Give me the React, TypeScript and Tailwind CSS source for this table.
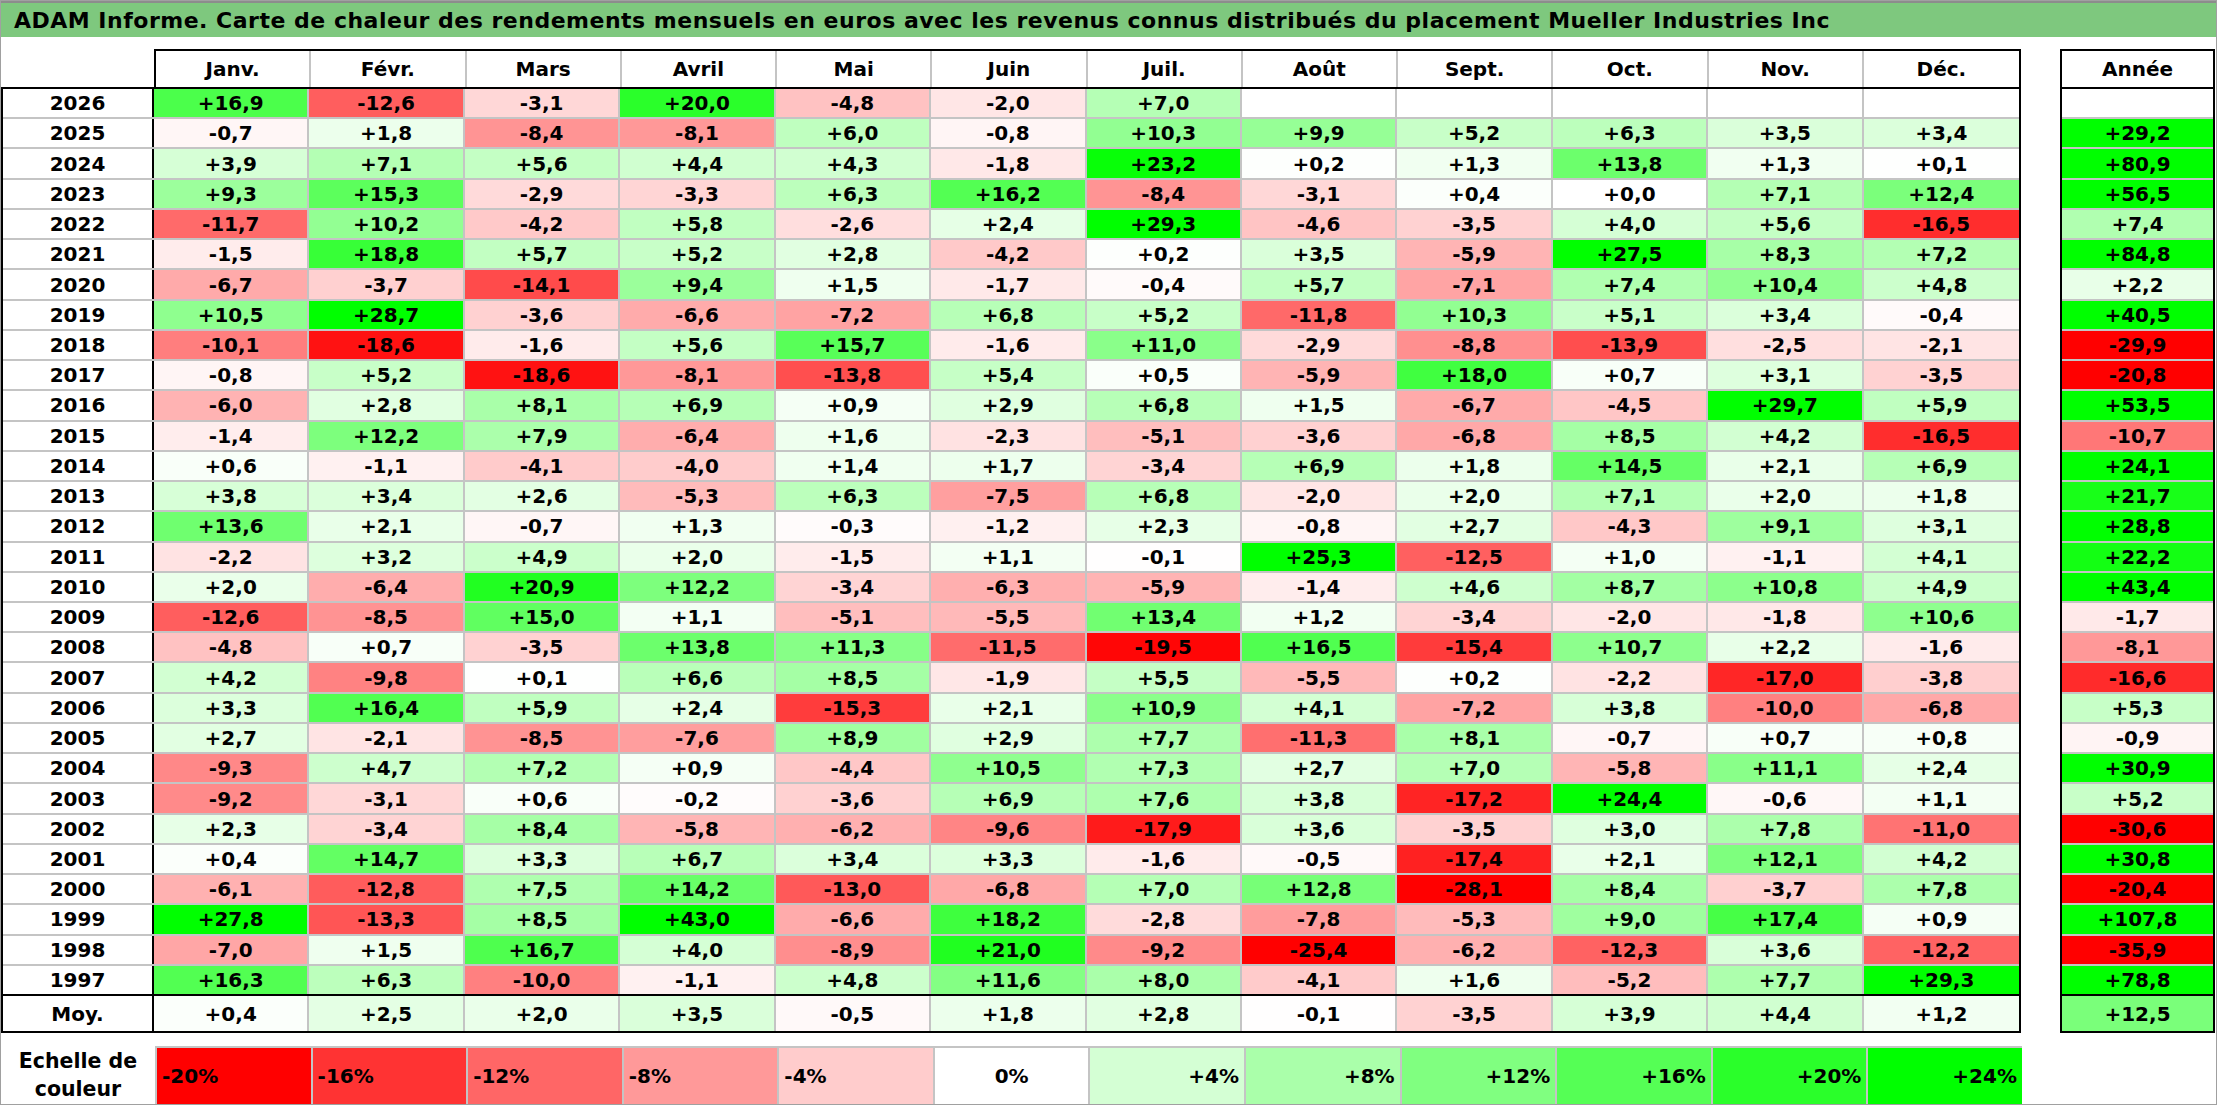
import React from 'react'

const MONTHS = ['Janv.', 'Févr.', 'Mars', 'Avril', 'Mai', 'Juin', 'Juil.', 'Août', 'Sept.', 'Oct.', 'Nov.', 'Déc.']

// year, 12 months (blank = no data), annual
const ROWS: [string, string[], string][] = [
  ['2026', ['+16,9', '-12,6', '-3,1', '+20,0', '-4,8', '-2,0', '+7,0', '', '', '', '', ''], ''],
  ['2025', ['-0,7', '+1,8', '-8,4', '-8,1', '+6,0', '-0,8', '+10,3', '+9,9', '+5,2', '+6,3', '+3,5', '+3,4'], '+29,2'],
  ['2024', ['+3,9', '+7,1', '+5,6', '+4,4', '+4,3', '-1,8', '+23,2', '+0,2', '+1,3', '+13,8', '+1,3', '+0,1'], '+80,9'],
  ['2023', ['+9,3', '+15,3', '-2,9', '-3,3', '+6,3', '+16,2', '-8,4', '-3,1', '+0,4', '+0,0', '+7,1', '+12,4'], '+56,5'],
  ['2022', ['-11,7', '+10,2', '-4,2', '+5,8', '-2,6', '+2,4', '+29,3', '-4,6', '-3,5', '+4,0', '+5,6', '-16,5'], '+7,4'],
  ['2021', ['-1,5', '+18,8', '+5,7', '+5,2', '+2,8', '-4,2', '+0,2', '+3,5', '-5,9', '+27,5', '+8,3', '+7,2'], '+84,8'],
  ['2020', ['-6,7', '-3,7', '-14,1', '+9,4', '+1,5', '-1,7', '-0,4', '+5,7', '-7,1', '+7,4', '+10,4', '+4,8'], '+2,2'],
  ['2019', ['+10,5', '+28,7', '-3,6', '-6,6', '-7,2', '+6,8', '+5,2', '-11,8', '+10,3', '+5,1', '+3,4', '-0,4'], '+40,5'],
  ['2018', ['-10,1', '-18,6', '-1,6', '+5,6', '+15,7', '-1,6', '+11,0', '-2,9', '-8,8', '-13,9', '-2,5', '-2,1'], '-29,9'],
  ['2017', ['-0,8', '+5,2', '-18,6', '-8,1', '-13,8', '+5,4', '+0,5', '-5,9', '+18,0', '+0,7', '+3,1', '-3,5'], '-20,8'],
  ['2016', ['-6,0', '+2,8', '+8,1', '+6,9', '+0,9', '+2,9', '+6,8', '+1,5', '-6,7', '-4,5', '+29,7', '+5,9'], '+53,5'],
  ['2015', ['-1,4', '+12,2', '+7,9', '-6,4', '+1,6', '-2,3', '-5,1', '-3,6', '-6,8', '+8,5', '+4,2', '-16,5'], '-10,7'],
  ['2014', ['+0,6', '-1,1', '-4,1', '-4,0', '+1,4', '+1,7', '-3,4', '+6,9', '+1,8', '+14,5', '+2,1', '+6,9'], '+24,1'],
  ['2013', ['+3,8', '+3,4', '+2,6', '-5,3', '+6,3', '-7,5', '+6,8', '-2,0', '+2,0', '+7,1', '+2,0', '+1,8'], '+21,7'],
  ['2012', ['+13,6', '+2,1', '-0,7', '+1,3', '-0,3', '-1,2', '+2,3', '-0,8', '+2,7', '-4,3', '+9,1', '+3,1'], '+28,8'],
  ['2011', ['-2,2', '+3,2', '+4,9', '+2,0', '-1,5', '+1,1', '-0,1', '+25,3', '-12,5', '+1,0', '-1,1', '+4,1'], '+22,2'],
  ['2010', ['+2,0', '-6,4', '+20,9', '+12,2', '-3,4', '-6,3', '-5,9', '-1,4', '+4,6', '+8,7', '+10,8', '+4,9'], '+43,4'],
  ['2009', ['-12,6', '-8,5', '+15,0', '+1,1', '-5,1', '-5,5', '+13,4', '+1,2', '-3,4', '-2,0', '-1,8', '+10,6'], '-1,7'],
  ['2008', ['-4,8', '+0,7', '-3,5', '+13,8', '+11,3', '-11,5', '-19,5', '+16,5', '-15,4', '+10,7', '+2,2', '-1,6'], '-8,1'],
  ['2007', ['+4,2', '-9,8', '+0,1', '+6,6', '+8,5', '-1,9', '+5,5', '-5,5', '+0,2', '-2,2', '-17,0', '-3,8'], '-16,6'],
  ['2006', ['+3,3', '+16,4', '+5,9', '+2,4', '-15,3', '+2,1', '+10,9', '+4,1', '-7,2', '+3,8', '-10,0', '-6,8'], '+5,3'],
  ['2005', ['+2,7', '-2,1', '-8,5', '-7,6', '+8,9', '+2,9', '+7,7', '-11,3', '+8,1', '-0,7', '+0,7', '+0,8'], '-0,9'],
  ['2004', ['-9,3', '+4,7', '+7,2', '+0,9', '-4,4', '+10,5', '+7,3', '+2,7', '+7,0', '-5,8', '+11,1', '+2,4'], '+30,9'],
  ['2003', ['-9,2', '-3,1', '+0,6', '-0,2', '-3,6', '+6,9', '+7,6', '+3,8', '-17,2', '+24,4', '-0,6', '+1,1'], '+5,2'],
  ['2002', ['+2,3', '-3,4', '+8,4', '-5,8', '-6,2', '-9,6', '-17,9', '+3,6', '-3,5', '+3,0', '+7,8', '-11,0'], '-30,6'],
  ['2001', ['+0,4', '+14,7', '+3,3', '+6,7', '+3,4', '+3,3', '-1,6', '-0,5', '-17,4', '+2,1', '+12,1', '+4,2'], '+30,8'],
  ['2000', ['-6,1', '-12,8', '+7,5', '+14,2', '-13,0', '-6,8', '+7,0', '+12,8', '-28,1', '+8,4', '-3,7', '+7,8'], '-20,4'],
  ['1999', ['+27,8', '-13,3', '+8,5', '+43,0', '-6,6', '+18,2', '-2,8', '-7,8', '-5,3', '+9,0', '+17,4', '+0,9'], '+107,8'],
  ['1998', ['-7,0', '+1,5', '+16,7', '+4,0', '-8,9', '+21,0', '-9,2', '-25,4', '-6,2', '-12,3', '+3,6', '-12,2'], '-35,9'],
  ['1997', ['+16,3', '+6,3', '-10,0', '-1,1', '+4,8', '+11,6', '+8,0', '-4,1', '+1,6', '-5,2', '+7,7', '+29,3'], '+78,8'],
]

const AVG = ['+0,4', '+2,5', '+2,0', '+3,5', '-0,5', '+1,8', '+2,8', '-0,1', '-3,5', '+3,9', '+4,4', '+1,2']
const AVG_YEAR = '+12,5'

const SCALE = [
  { label: '-20%', cls: 'bg-[#ff0000] justify-start pl-[5px]' },
  { label: '-16%', cls: 'bg-[#ff3333] justify-start pl-[5px]' },
  { label: '-12%', cls: 'bg-[#ff6666] justify-start pl-[5px]' },
  { label: '-8%', cls: 'bg-[#ff9999] justify-start pl-[5px]' },
  { label: '-4%', cls: 'bg-[#ffcccc] justify-start pl-[5px]' },
  { label: '0%', cls: 'bg-white justify-center' },
  { label: '+4%', cls: 'bg-[#d4ffd4] justify-end pr-[5px]' },
  { label: '+8%', cls: 'bg-[#aaffaa] justify-end pr-[5px]' },
  { label: '+12%', cls: 'bg-[#80ff80] justify-end pr-[5px]' },
  { label: '+16%', cls: 'bg-[#55ff55] justify-end pr-[5px]' },
  { label: '+20%', cls: 'bg-[#2aff2a] justify-end pr-[5px]' },
  { label: '+24%', cls: 'bg-[#00ff00] justify-end pr-[5px]' },
]

// red down to -20 %, green up to +24 %
function heat(s: string) {
  if (!s) return '#ffffff'
  const v = parseFloat(s.replace(',', '.'))
  if (v < 0) {
    const c = Math.round(255 * (1 - Math.min(-v / 20, 1)))
    return `rgb(255,${c},${c})`
  }
  const c = Math.round(255 * (1 - Math.min(v / 24, 1)))
  return `rgb(${c},255,${c})`
}

const cellText = "font-['DejaVu_Sans',sans-serif] text-[20px] font-bold leading-none text-black"

function Cell({ value, last }: { value: string; last?: boolean }) {
  return (
    <div
      className={`flex items-center justify-center ${last ? '' : 'border-r-2 border-[#c4c4c4]'}`}
      style={{ background: heat(value) }}
    >
      {value}
    </div>
  )
}

export default function App() {
  return (
    <div className="w-[2217px] h-[1105px] flex flex-col border border-[#a0a0a0] bg-white text-black overflow-hidden">
      <div className="h-[36px] shrink-0 flex items-center pl-[13px] bg-[#7ec87e] border-t-2 border-[#8c8c8c] font-['DejaVu_Sans',sans-serif] text-[22px] tracking-[0.5px] font-bold whitespace-nowrap">
        ADAM Informe. Carte de chaleur des rendements mensuels en euros avec les revenus connus distribués du placement Mueller Industries Inc
      </div>

      <div className={`mt-[12px] flex ${cellText}`}>
        {/* main table */}
        <div className="w-[2020px] flex flex-col">
          <div className="h-[38px] flex">
            <div className="w-[153px] shrink-0" />
            <div className="flex-1 grid grid-cols-12 border-t-2 border-x-2 border-black">
              {MONTHS.map((m, i) => (
                <div key={m} className={`flex items-center justify-center ${i < 11 ? 'border-r-2 border-[#c4c4c4]' : ''}`}>
                  {m}
                </div>
              ))}
            </div>
          </div>

          <div className="h-[909px] flex flex-col border-2 border-black">
            {ROWS.map(([year, vals], r) => (
              <div
                key={year}
                className={`flex-1 grid grid-cols-[151px_repeat(12,minmax(0,1fr))] ${r < ROWS.length - 1 ? 'border-b-2 border-[#c4c4c4]' : ''}`}
              >
                <div className="flex items-center justify-center border-r-2 border-black">{year}</div>
                {vals.map((v, i) => (
                  <Cell key={i} value={v} last={i === 11} />
                ))}
              </div>
            ))}
          </div>

          <div className="h-[37px] grid grid-cols-[151px_repeat(12,minmax(0,1fr))] border-x-2 border-b-2 border-black">
            <div className="flex items-center justify-center border-r-2 border-black">Moy.</div>
            {AVG.map((v, i) => (
              <Cell key={i} value={v} last={i === 11} />
            ))}
          </div>
        </div>

        {/* yearly column */}
        <div className="ml-[39px] w-[155px] flex flex-col">
          <div className="h-[38px] flex items-center justify-center border-t-2 border-x-2 border-black">Année</div>
          <div className="h-[909px] flex flex-col border-2 border-black">
            {ROWS.map(([year, , total], r) => (
              <div
                key={year}
                className={`flex-1 flex items-center justify-center ${r < ROWS.length - 1 ? 'border-b-2 border-[#c4c4c4]' : ''}`}
                style={{ background: heat(total) }}
              >
                {total}
              </div>
            ))}
          </div>
          <div
            className="h-[37px] flex items-center justify-center border-x-2 border-b-2 border-black"
            style={{ background: heat(AVG_YEAR) }}
          >
            {AVG_YEAR}
          </div>
        </div>
      </div>

      {/* colour scale */}
      <div className={`mt-[13px] h-[58px] flex ${cellText}`}>
        <div className="w-[154px] shrink-0 flex flex-col items-center justify-center text-[20.5px] leading-[28px]">
          <span>Echelle de</span>
          <span>couleur</span>
        </div>
        <div className="w-[1867px] grid grid-cols-12 border-t-2 border-[#c4c4c4]">
          {SCALE.map((s) => (
            <div key={s.label} className={`flex items-center border-l-2 border-[#c4c4c4] ${s.cls}`}>
              {s.label}
            </div>
          ))}
        </div>
      </div>
    </div>
  )
}
